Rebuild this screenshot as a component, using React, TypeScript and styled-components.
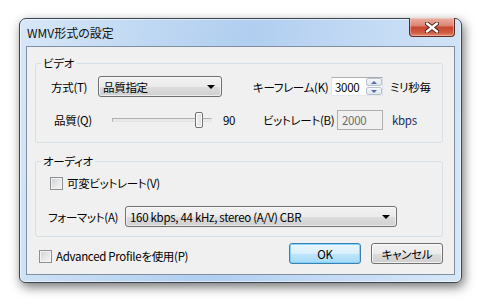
import styled, { createGlobalStyle } from 'styled-components';

const GlobalStyle = createGlobalStyle`
  html, body {
    margin: 0;
    padding: 0;
    background: #ffffff;
  }
  body {
    font-family: "Noto Sans CJK JP", "Noto Sans", sans-serif;
    font-size: 11.5px;
    letter-spacing: -0.3px;
    font-feature-settings: "palt";
    color: #000;
  }
`;

const Page = styled.div`
  width: 484px;
  height: 304px;
  padding: 18px 0 0 19px;
  box-sizing: border-box;
`;

const Window = styled.div`
  width: 443px;
  height: 265px;
  box-sizing: border-box;
  border: 1px solid #3b4550;
  border-radius: 7px 7px 6px 6px;
  padding: 0 6px 7px 6px;
  background: linear-gradient(100deg, #d7e7f8 0%, #bed7f2 28%, #b1cef0 48%, #c3daf4 72%, #d6e7f8 100%);
  box-shadow: inset 0 0 0 1px rgba(255, 255, 255, 0.55), 2px 4px 11px rgba(0, 0, 0, 0.55);
  display: flex;
  flex-direction: column;
`;

const TitleBar = styled.div`
  height: 27px;
  display: flex;
  align-items: center;
  justify-content: space-between;
`;

const Title = styled.span`
  padding-left: 1px;
  font-size: 12px;
  letter-spacing: 0;
  color: #101010;
`;

const CloseButton = styled.div`
  align-self: flex-start;
  margin-top: -1px;
  width: 46px;
  height: 19px;
  box-sizing: border-box;
  border: 1px solid #5e2a20;
  border-top: none;
  border-radius: 0 0 4px 4px;
  background: linear-gradient(#eab0a4 0%, #dd8572 42%, #c9462f 52%, #cf5a40 80%, #e2876c 100%);
  box-shadow: inset 0 0 0 1px rgba(255, 220, 210, 0.45);
  display: flex;
  align-items: center;
  justify-content: center;
`;

const Client = styled.div`
  flex: 1;
  box-sizing: border-box;
  border: 1px solid #7f8ea0;
  background: #f0f0f0;
  padding: 16px 11px 0 8px;
  display: flex;
  flex-direction: column;
`;

const Group = styled.div<{ $h: number; $pl: number; $mt?: number }>`
  position: relative;
  height: ${(p) => p.$h}px;
  margin-top: ${(p) => p.$mt ?? 0}px;
  box-sizing: border-box;
  border: 1px solid #d5dfe5;
  border-radius: 3px;
  padding-left: ${(p) => p.$pl}px;
`;

const GroupTitle = styled.span`
  position: absolute;
  top: -9px;
  left: 5px;
  padding: 0 2px;
  line-height: 16px;
  background: #f0f0f0;
`;

const Row = styled.div<{ $mt: number; $h?: number }>`
  display: flex;
  align-items: center;
  margin-top: ${(p) => p.$mt}px;
  height: ${(p) => p.$h ?? 21}px;
`;

const Label = styled.span<{ $w?: number; $ml?: number; $color?: string }>`
  flex: none;
  width: ${(p) => (p.$w ? `${p.$w}px` : 'auto')};
  margin-left: ${(p) => p.$ml ?? 0}px;
  color: ${(p) => p.$color ?? '#000'};
  white-space: nowrap;
  line-height: 16px;
`;

const Combo = styled.div<{ $w: number }>`
  flex: none;
  width: ${(p) => p.$w}px;
  height: 21px;
  box-sizing: border-box;
  border: 1px solid #707070;
  border-radius: 3px;
  background: linear-gradient(#f2f2f2 0%, #ebebeb 50%, #dddddd 51%, #cfcfcf 100%);
  box-shadow: inset 0 0 0 1px rgba(255, 255, 255, 0.6);
  display: flex;
  align-items: center;
  justify-content: space-between;
  padding: 0 6px 0 4px;
`;

const Arrow = styled.span`
  width: 0;
  height: 0;
  border-left: 4px solid transparent;
  border-right: 4px solid transparent;
  border-top: 4px solid #000;
`;

const Spin = styled.div`
  flex: none;
  width: 52px;
  height: 19px;
  box-sizing: border-box;
  border: 1px solid;
  border-color: #abadb3 #dbdfe6 #e3e9ef #e2e3ea;
  background: #fff;
  display: flex;
  align-items: center;
  padding-left: 3px;
`;

const SpinValue = styled.span`
  flex: 1;
  line-height: 16px;
`;

const SpinButtons = styled.div`
  width: 16px;
  height: 100%;
  display: flex;
  flex-direction: column;
  gap: 1px;
`;

const SpinButton = styled.div<{ $up?: boolean }>`
  flex: 1;
  box-sizing: border-box;
  border: 1px solid #b8c2cc;
  border-radius: 2px;
  background: linear-gradient(#f6f8fa, #e0e6ec);
  display: flex;
  align-items: center;
  justify-content: center;
  &::after {
    content: '';
    border-left: 3px solid transparent;
    border-right: 3px solid transparent;
    ${(p) => (p.$up ? 'border-bottom: 3px solid #4d6fa3;' : 'border-top: 3px solid #4d6fa3;')}
  }
`;

const Disabled = styled.div`
  flex: none;
  width: 46px;
  height: 20px;
  box-sizing: border-box;
  border: 1px solid #afafaf;
  background: #f0f0f0;
  color: #6d6d6d;
  display: flex;
  align-items: center;
  padding-left: 4px;
`;

const Slider = styled.div`
  position: relative;
  flex: none;
  width: 100px;
  height: 16px;
  display: flex;
  align-items: center;
`;

const Track = styled.div`
  width: 100%;
  height: 4px;
  box-sizing: border-box;
  border: 1px solid;
  border-color: #b0b0b0 #e3e3e3 #e3e3e3 #b0b0b0;
  background: #e7eaea;
`;

const Thumb = styled.div`
  position: absolute;
  top: 0;
  width: 8px;
  height: 16px;
  box-sizing: border-box;
  border: 1px solid #707070;
  border-radius: 2px;
  background: linear-gradient(90deg, #f5f5f5, #dcdcdc);
  box-shadow: inset 0 0 0 1px #fff;
`;

const CheckRow = styled.label<{ $ml?: number }>`
  display: flex;
  align-items: center;
  gap: 4px;
  margin-left: ${(p) => p.$ml ?? 0}px;
`;

const CheckBox = styled.span`
  flex: none;
  width: 13px;
  height: 13px;
  box-sizing: border-box;
  border: 1px solid #8e8f8f;
  background: linear-gradient(135deg, #cdd0d4 0%, #e8e9eb 60%, #f5f5f5 100%);
  box-shadow: inset 0 0 0 1px #f4f4f4;
`;

const BottomRow = styled.div`
  display: flex;
  align-items: flex-end;
  justify-content: space-between;
  margin-top: 6px;
  padding-left: 4px;
`;

const Buttons = styled.div`
  display: flex;
  gap: 10px;
`;

const Button = styled.div<{ $primary?: boolean }>`
  width: 72px;
  height: 21px;
  box-sizing: border-box;
  border: 1px solid ${(p) => (p.$primary ? '#3c7fb1' : '#707070')};
  border-radius: 3px;
  background: ${(p) =>
    p.$primary
      ? 'linear-gradient(#eaf6fd 0%, #d9f0fc 50%, #bee6fd 51%, #a7d9f5 100%)'
      : 'linear-gradient(#f2f2f2 0%, #ebebeb 50%, #dddddd 51%, #cfcfcf 100%)'};
  box-shadow: inset 0 0 0 1px ${(p) => (p.$primary ? 'rgba(120, 210, 255, 0.9)' : 'rgba(255, 255, 255, 0.7)')};
  display: flex;
  align-items: center;
  justify-content: center;
`;

function App() {
  const quality = 90;

  return (
    <>
      <GlobalStyle />
      <Page>
        <Window>
          <TitleBar>
            <Title>WMV形式の設定</Title>
            <CloseButton>
              <svg width="14" height="11" viewBox="0 0 14 11">
                <path
                  d="M2 1.5 L12 9.5 M12 1.5 L2 9.5"
                  stroke="#4a1e16"
                  strokeWidth="4.2"
                  strokeLinecap="round"
                />
                <path
                  d="M2 1.5 L12 9.5 M12 1.5 L2 9.5"
                  stroke="#ffffff"
                  strokeWidth="2.4"
                  strokeLinecap="round"
                />
              </svg>
            </CloseButton>
          </TitleBar>
          <Client>
            <Group $h={80} $pl={15}>
              <GroupTitle>ビデオ</GroupTitle>
              <Row $mt={12}>
                <Label $w={47}>方式(T)</Label>
                <Combo $w={124}>
                  <span>品質指定</span>
                  <Arrow />
                </Combo>
                <Label $w={78} $ml={31}>キーフレーム(K)</Label>
                <Spin>
                  <SpinValue>3000</SpinValue>
                  <SpinButtons>
                    <SpinButton $up />
                    <SpinButton />
                  </SpinButtons>
                </Spin>
                <Label $ml={7}>ミリ秒毎</Label>
              </Row>
              <Row $mt={12}>
                <Label $w={58} $ml={3}>品質(Q)</Label>
                <Slider>
                  <Track />
                  <Thumb style={{ left: `${(quality / 100) * 92}px` }} />
                </Slider>
                <Label $w={40} $ml={11}>{quality}</Label>
                <Label $w={74}>ビットレート(B)</Label>
                <Disabled>2000</Disabled>
                <Label $ml={9} $color="#1b2f66">kbps</Label>
              </Row>
            </Group>
            <Group $h={76} $pl={12} $mt={18}>
              <GroupTitle>オーディオ</GroupTitle>
              <Row $mt={13} $h={16}>
                <CheckRow $ml={2}>
                  <CheckBox />
                  <Label>可変ビットレート(V)</Label>
                </CheckRow>
              </Row>
              <Row $mt={15}>
                <Label $w={77}>フォーマット(A)</Label>
                <Combo $w={272}>
                  <span>160 kbps, 44 kHz, stereo (A/V) CBR</span>
                  <Arrow />
                </Combo>
              </Row>
            </Group>
            <BottomRow>
              <CheckRow>
                <CheckBox />
                <Label>Advanced Profileを使用(P)</Label>
              </CheckRow>
              <Buttons>
                <Button $primary>OK</Button>
                <Button>キャンセル</Button>
              </Buttons>
            </BottomRow>
          </Client>
        </Window>
      </Page>
    </>
  );
}

export default App;
